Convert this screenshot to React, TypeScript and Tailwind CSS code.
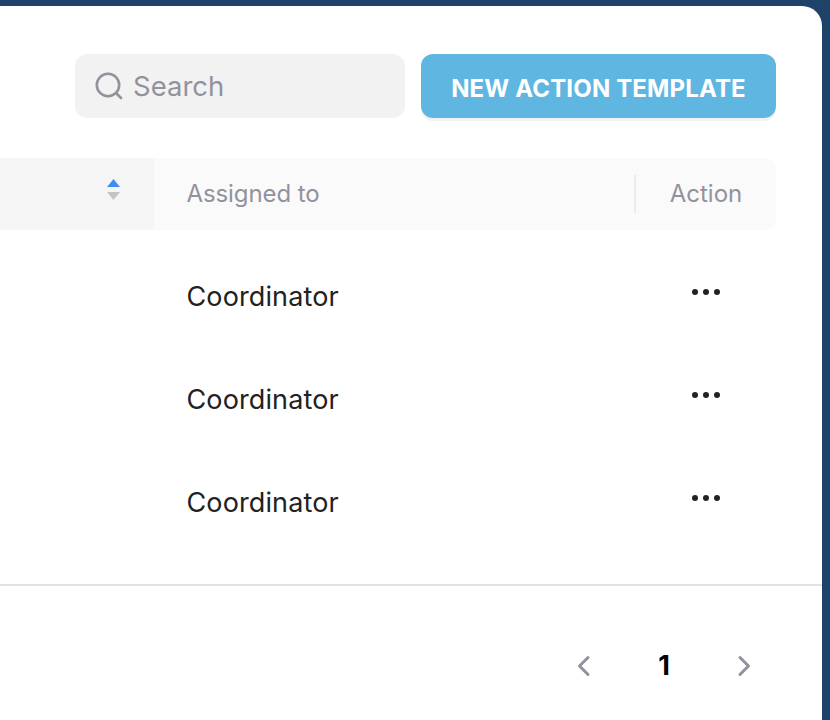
import React from "react";

const Row = () => (
  <div className="flex h-[103px] items-center">
    <div className="w-[154px]" />
    <div className="w-[481px] pl-[32.5px] pt-[2px] text-[27px] tracking-[0.12px] text-[#222222]">Coordinator</div>
    <div className="flex w-[141px] justify-center">
      <svg width="30" height="8" viewBox="0 0 30 8" className="mb-[9px]" fill="#222222">
        <circle cx="4" cy="4" r="3" />
        <circle cx="15" cy="4" r="3" />
        <circle cx="26" cy="4" r="3" />
      </svg>
    </div>
  </div>
);

export default function App() {
  return (
    <div className="h-[720px] w-[830px] overflow-hidden bg-[#1e4268] pt-[6px] font-['Inter',sans-serif]">
      <div className="h-[714px] w-[822px] rounded-tr-[20px] bg-white">
        <div className="flex gap-4 pl-[75px] pt-[48px]">
          <div className="flex h-16 w-[330px] items-center gap-[9px] rounded-xl bg-[#f2f2f3] pl-[19px]">
            <svg width="30" height="30" viewBox="0 0 30 30" fill="none" stroke="#92929d" strokeWidth="2.6" strokeLinecap="round">
              <circle cx="14" cy="14" r="11.2" />
              <path d="M22.5 22.5 L27 27" />
            </svg>
            <span className="pt-[2px] text-[27.5px] text-[#92929d]">Search</span>
          </div>
          <div className="flex h-16 w-[355px] items-center justify-center rounded-xl bg-[#5fb6e1] pt-[6px] text-[24px] font-bold tracking-[0.15px] text-white shadow-[0_3px_0_#f2f2f3]">
            NEW ACTION TEMPLATE
          </div>
        </div>
        <div className="mt-10 flex h-[72px] w-[776px] items-center overflow-hidden rounded-r-xl bg-[#fafafa] text-[24px] text-[#92929d]">
          <div className="flex h-full w-[154px] items-center justify-end bg-[#f5f5f5] pb-[8px] pr-[34px]">
            <svg width="13" height="22" viewBox="0 0 13 22">
              <path d="M6.5 0 L13 8 L0 8 Z" fill="#3b8cf5" />
              <path d="M0 13 L13 13 L6.5 21 Z" fill="#c4c4c4" />
            </svg>
          </div>
          <div className="flex-1 pl-[32.5px] tracking-[-0.1px]">Assigned to</div>
          <div className="h-[38px] w-[2px] bg-[#ebebeb]" />
          <div className="w-[140px] text-center">Action</div>
        </div>
        <div className="pt-[15px]">
          <Row />
          <Row />
          <Row />
        </div>
        <div className="mt-[30px] h-[2px] w-full bg-[#e2e2e2]" />
        <div className="flex h-[160px] items-center pl-[574px]">
          <svg width="20" height="24" viewBox="0 0 20 24" fill="none" stroke="#92929d" strokeWidth="3" strokeLinecap="round" strokeLinejoin="round">
            <path d="M14 3.5 L5.5 12 L14 20.5" />
          </svg>
          <span className="w-[140px] text-center text-[27px] font-bold text-black">1</span>
          <svg width="20" height="24" viewBox="0 0 20 24" fill="none" stroke="#92929d" strokeWidth="3" strokeLinecap="round" strokeLinejoin="round">
            <path d="M6 3.5 L14.5 12 L6 20.5" />
          </svg>
        </div>
      </div>
    </div>
  );
}
